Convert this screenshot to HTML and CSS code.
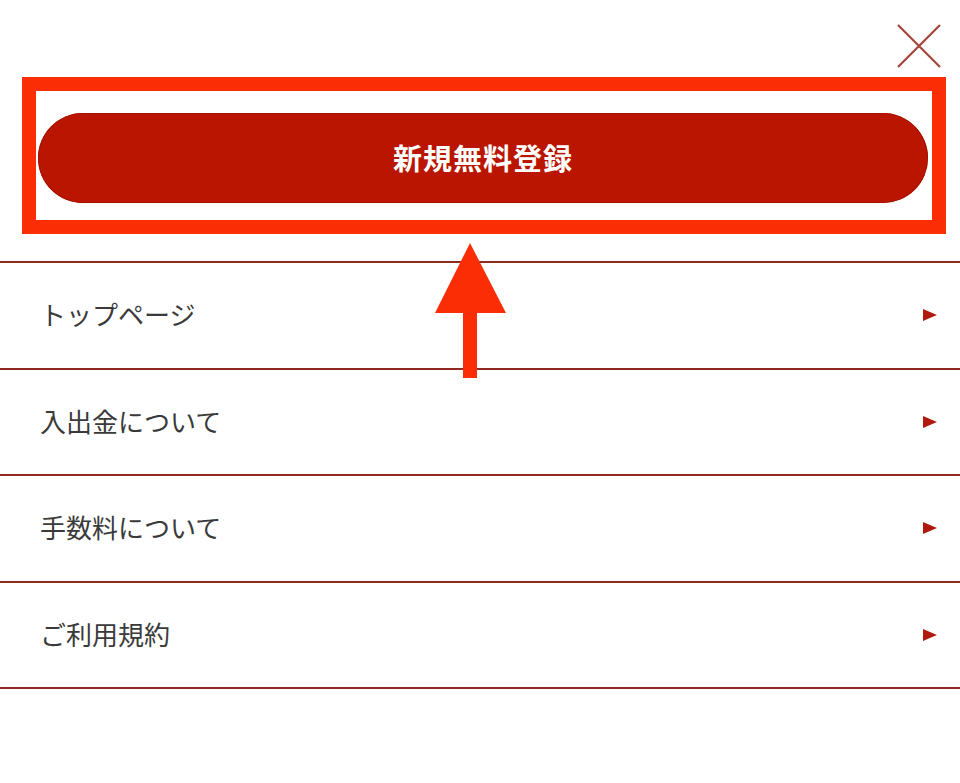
FILE: index.html
```html
<!DOCTYPE html>
<html lang="ja">
<head>
<meta charset="utf-8">
<title>メニュー</title>
<link rel="stylesheet" href="styles.css">
</head>
<body>
<div class="menu">
  <div class="header">
    <button class="close" aria-label="閉じる">
      <svg width="44" height="44" viewBox="0 0 44 44"><path d="M1 1 L43 43 M43 1 L1 43" stroke="#a4463c" stroke-width="2.2" fill="none"/></svg>
    </button>
  </div>
  <div class="signup">
    <a class="signup-btn" href="#">新規無料登録</a>
  </div>
  <ul class="nav">
    <li class="nav-item"><span>トップページ</span><i class="tri"></i></li>
    <li class="nav-item"><span>入出金について</span><i class="tri"></i></li>
    <li class="nav-item"><span>手数料について</span><i class="tri"></i></li>
    <li class="nav-item"><span>ご利用規約</span><i class="tri"></i></li>
  </ul>
  <div class="highlight"></div>
  <svg class="arrow" width="72" height="136" viewBox="0 0 72 136"><path d="M35 0 L71 70 L42 70 L42 135 L28 135 L28 70 L0 70 Z" fill="#fb2d05"/></svg>
</div>
</body>
</html>
```
FILE: styles.css
```css
html, body {
  margin: 0;
  padding: 0;
  background: #fff;
}
body {
  font-family: "Noto Sans CJK JP", "Noto Sans", sans-serif;
  color: #333;
}
.menu {
  position: relative;
  width: 960px;
  height: 783px;
}
.header {
  height: 113px;
  display: flex;
  justify-content: flex-end;
  align-items: flex-start;
  padding-right: 19px;
  box-sizing: border-box;
}
.close {
  margin-top: 24px;
  padding: 0;
  border: 0;
  background: none;
  width: 44px;
  height: 44px;
}
.close svg { display: block; }
.signup {
  padding: 0 32px 0 38px;
}
.signup-btn {
  display: flex;
  align-items: center;
  justify-content: center;
  height: 90px;
  border-radius: 45px;
  background: #b91500;
  color: #fff;
  font-size: 29px;
  font-weight: 700;
  letter-spacing: 1px;
  text-decoration: none;
  box-shadow: inset 0 0 0 1px #a81300;
  padding-bottom: 2px;
  box-sizing: border-box;
}
.nav {
  list-style: none;
  margin: 58px 0 0;
  padding: 0;
  border-top: 2px solid #8e2a20;
}
.nav-item {
  height: 106.6px;
  border-bottom: 2px solid #8e2a20;
  display: flex;
  align-items: center;
  justify-content: space-between;
  padding: 0 23px 3px 40px;
  box-sizing: border-box;
  font-size: 26px;
  font-weight: 400;
  color: #3a3a3a;
}
.tri {
  width: 0;
  height: 0;
  margin-top: 3px;
  border-top: 6.5px solid transparent;
  border-bottom: 6.5px solid transparent;
  border-left: 14px solid #b01a0e;
}
.highlight {
  position: absolute;
  left: 22px;
  top: 77px;
  width: 924px;
  height: 157px;
  border: 14px solid #fb2d05;
  box-sizing: border-box;
}
.arrow {
  position: absolute;
  left: 435px;
  top: 243px;
}
```
